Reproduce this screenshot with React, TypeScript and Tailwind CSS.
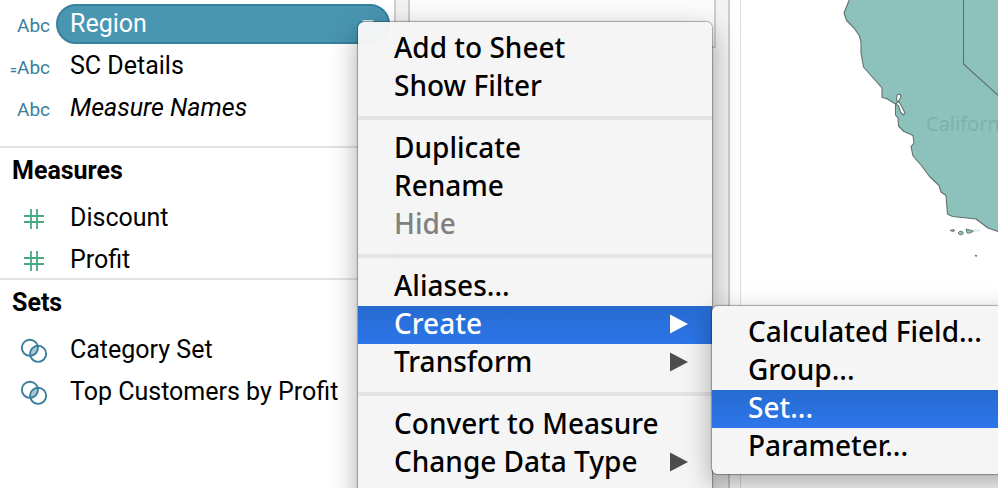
import type { ReactNode } from "react";

type MenuEntry = {
  label: string;
  disabled?: boolean;
  active?: boolean;
  children?: MenuEntry[];
  arrow?: boolean;
};

const menuGroups: MenuEntry[][] = [
  [{ label: "Add to Sheet" }, { label: "Show Filter" }],
  [{ label: "Duplicate" }, { label: "Rename" }, { label: "Hide", disabled: true }],
  [
    { label: "Aliases..." },
    {
      label: "Create",
      active: true,
      arrow: true,
      children: [
        { label: "Calculated Field..." },
        { label: "Group..." },
        { label: "Set...", active: true },
        { label: "Parameter..." },
      ],
    },
    { label: "Transform", arrow: true },
  ],
  [{ label: "Convert to Measure" }, { label: "Change Data Type", arrow: true }],
];

function AbcIcon({ calculated = false }: { calculated?: boolean }) {
  return (
    <span className="pt-1 text-[19px] text-[#3a7f9c]">
      {calculated && <span className="text-xs font-bold">=</span>}Abc
    </span>
  );
}

function NumberIcon() {
  return (
    <svg className="w-8 h-8" viewBox="0 0 32 32" fill="none" stroke="#46a982" strokeWidth="1.8">
      <path d="M13 7v20M19 7v20M6 14h20M6 20h20" />
    </svg>
  );
}

function SetIcon() {
  return (
    <svg className="w-8 h-8" viewBox="0 0 32 32" fill="none" stroke="#3a7f9c" strokeWidth="1.9">
      <path d="M12.3 21.8A8.1 8.1 0 0 1 19.7 11.8A8.1 8.1 0 0 1 12.3 21.8Z" fill="#a9c8d6" stroke="none" />
      <circle cx="11.9" cy="13.8" r="8.1" />
      <circle cx="20.1" cy="19.8" r="8.1" />
    </svg>
  );
}

function Field({
  icon,
  label,
  selected,
  italic,
}: {
  icon: ReactNode;
  label: string;
  selected?: boolean;
  italic?: boolean;
}) {
  return (
    <li className="flex h-9 items-center pr-1">
      <span className="flex w-14 shrink-0 justify-end pr-[6px]">{icon}</span>
      <button
        type="button"
        className={`flex h-10 flex-1 shrink-0 items-center justify-between rounded-full border-2 pl-3 pr-[14px] text-left text-[25px] ${
          selected ? "border-[#37809e] bg-[#4996b2] text-white" : "border-transparent text-black"
        } ${italic ? "italic" : ""}`}
      >
        {label}
        {selected && (
          <svg className="w-3 h-2" viewBox="0 0 12 8" fill="#d5e6ed">
            <path d="M0 0h12L6 8z" />
          </svg>
        )}
      </button>
    </li>
  );
}

function Section({ title, children }: { title: string; children: ReactNode }) {
  return (
    <section className="border-t-2 border-[#e3e3e3]">
      <h2 className="mb-[6px] flex h-[46px] items-center pl-3 text-[25px] font-bold">{title}</h2>
      <ul className="flex flex-col gap-[6px]">{children}</ul>
    </section>
  );
}

function MenuItem({ item }: { item: MenuEntry }) {
  return (
    <li className="relative">
      <button
        type="button"
        disabled={item.disabled}
        className={`flex h-[38px] w-full items-center justify-between whitespace-nowrap pb-1 pl-9 pr-6 text-left ${
          item.active ? "bg-linear-to-b from-[#276bd0] to-[#2c76ea] text-white" : ""
        } ${item.disabled ? "text-[#808080]" : ""}`}
      >
        {item.label}
        {item.arrow && (
          <svg className="w-[18px] h-[22px]" viewBox="0 0 18 22" fill={item.active ? "#fff" : "#4d4d4d"}>
            <path d="M0 2.5L18 12L0 21.5z" />
          </svg>
        )}
      </button>
      {item.children && (
        <div className="absolute left-full top-0 z-10 w-[312px]">
          <Menu groups={[item.children]} />
        </div>
      )}
    </li>
  );
}

function Menu({ groups }: { groups: MenuEntry[][] }) {
  return (
    <div className="h-full rounded-md bg-[#f5f5f5]/98 py-2 text-[28px] font-medium leading-[38px] text-black shadow-[0_0_1px_1px_rgba(0,0,0,0.3),0_10px_28px_rgba(0,0,0,0.35)] font-['Noto_Sans',sans-serif]">
      {groups.map((group, index) => (
        <div key={index}>
          {index > 0 && <hr className="my-[10px] border-t-4 border-[#e4e4e4]" />}
          <ul>
            {group.map((item) => (
              <MenuItem key={item.label} item={item} />
            ))}
          </ul>
        </div>
      ))}
    </div>
  );
}

function MapView() {
  return (
    <svg
      className="h-full w-full"
      viewBox="741 0 257 488"
      preserveAspectRatio="xMinYMin slice"
      fill="#8dc1bc"
      stroke="#62706e"
      strokeWidth="1.1"
      strokeLinejoin="round"
    >
      <path d="M850 -2L844 13L846.500 20.500L854 28L859.500 36L861 42V53L863.500 67L882 88V97.500L886.500 98.500L895.500 104V115L898 118L898.500 126L904 131.500L913 135.500L914 143L911 146.500L913 156L921 165L929.500 176.500L939 185.500L941 192L946 195.500L947.500 214L952.500 216.500L976 219L988 228L1000 232V-2Z" />
      <path d="M897 95L900 94L901 97L898.500 101L902 107L905 113L903.500 115L900.500 112L898.500 106L895.500 104L898 102L896.500 100Z" fill="#fff" />
      <path d="M963.500 -2V64L1000 97" fill="none" />
      <path d="M950 230.500l3 -1l2 1l-2 1zM958 233l2 -2l3 1v2l-3 1zM966 229l8 2l-4 2h-3z" strokeWidth="0.9" />
      <path d="M973 230.500h7" stroke="#dbe7e5" strokeWidth="2" />
      <path d="M975 255.500l2 0.500" strokeWidth="1.8" />
      <text x="926" y="131" fill="#7cb1ac" stroke="none" className="text-[20px] font-['Noto_Sans',sans-serif]">
        California
      </text>
    </svg>
  );
}

function App() {
  return (
    <div className="relative flex h-screen overflow-hidden bg-[#f2f2f2] text-black font-['Roboto','Liberation_Sans',sans-serif]">
      {/* Data pane */}
      <aside className="w-[396px] shrink-0 border-r-2 border-[#d0d0d0] bg-white pt-[6px]">
        <ul className="flex flex-col gap-[6px] pb-5">
          <Field icon={<AbcIcon />} label="Region" selected />
          <Field icon={<AbcIcon calculated />} label="SC Details" />
          <Field icon={<AbcIcon />} label="Measure Names" italic />
        </ul>
        <Section title="Measures">
          <Field icon={<NumberIcon />} label="Discount" />
          <Field icon={<NumberIcon />} label="Profit" />
        </Section>
        <Section title="Sets">
          <Field icon={<SetIcon />} label="Category Set" />
          <Field icon={<SetIcon />} label="Top Customers by Profit" />
        </Section>
      </aside>

      {/* Shelf column */}
      <div className="w-[334px] shrink-0 border-r-2 border-[#cccccc] px-3">
        <div className="h-12 border-x-2 border-b-2 border-[#cccccc] bg-[#fbfbfb]" />
      </div>

      {/* Sheet */}
      <main className="min-w-0 flex-1 bg-white pl-[10px]">
        <div className="h-full border-l border-[#dedede]">
          <MapView />
        </div>
      </main>

      {/* Field context menu, runs past the bottom of the window */}
      <div className="absolute left-[358px] top-[22px] h-full w-[354px]">
        <Menu groups={menuGroups} />
      </div>
    </div>
  );
}

export default App;
